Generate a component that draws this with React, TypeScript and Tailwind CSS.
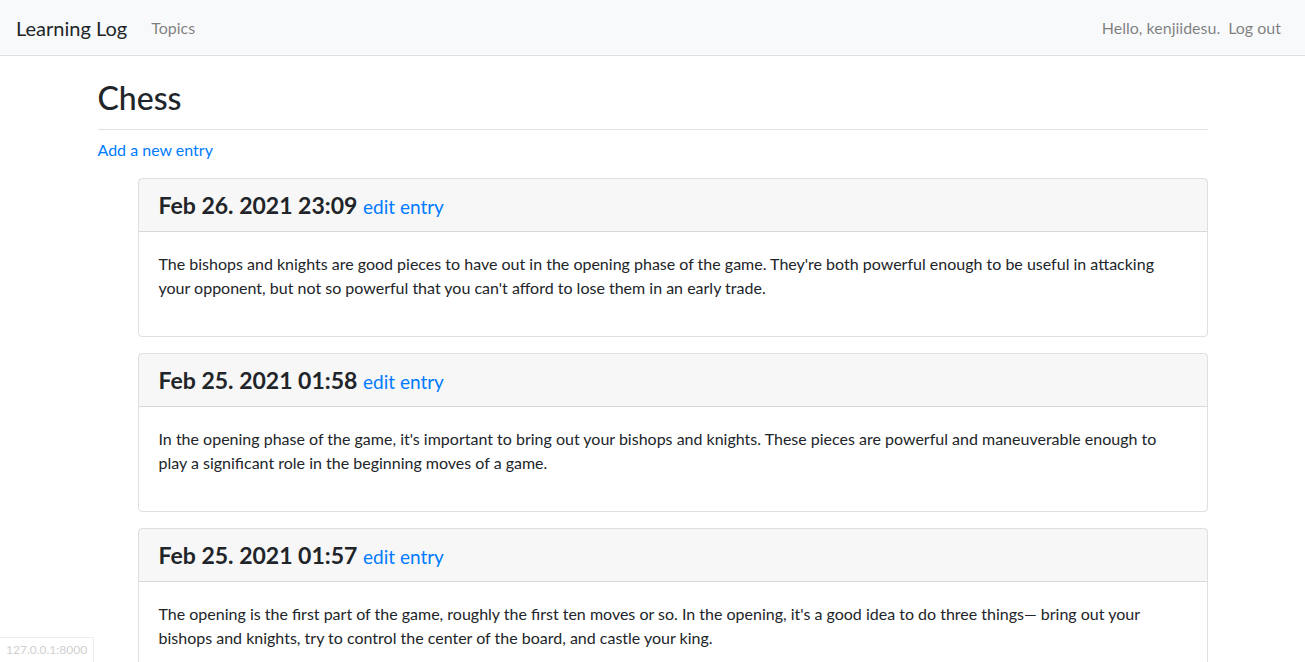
const entries = [
  {
    date: "Feb 26. 2021 23:09",
    text: "The bishops and knights are good pieces to have out in the opening phase of the game. They're both powerful enough to be useful in attacking your opponent, but not so powerful that you can't afford to lose them in an early trade.",
  },
  {
    date: "Feb 25. 2021 01:58",
    text: "In the opening phase of the game, it's important to bring out your bishops and knights. These pieces are powerful and maneuverable enough to play a significant role in the beginning moves of a game.",
  },
  {
    date: "Feb 25. 2021 01:57",
    text: "The opening is the first part of the game, roughly the first ten moves or so. In the opening, it's a good idea to do three things\u2014 bring out your bishops and knights, try to control the center of the board, and castle your king.",
  },
];

const App = () => {
  return (
    <div className="min-h-screen bg-white text-[#212529] font-['Lato',sans-serif] text-base leading-6">
      <nav className="flex h-[56px] items-center justify-between border-b border-[#dfdfdf] bg-[#f8f9fa] px-4">
        <div className="flex items-center">
          <span className="mr-4 text-xl leading-[30px] text-[#212529]">Learning Log</span>
          <a className="px-2 text-[rgba(0,0,0,0.5)]">Topics</a>
        </div>
        <div className="flex items-center">
          <span className="text-[rgba(0,0,0,0.5)]">Hello, kenjiidesu.</span>
          <a className="px-2 text-[rgba(0,0,0,0.5)]">Log out</a>
        </div>
      </nav>

      <main className="mx-auto w-[1140px] px-[15px]">
        <div className="mt-[23px] mb-2 border-b border-[#dee2e6] pb-3">
          <h2 className="text-[32px] font-medium leading-[38px]">Chess</h2>
        </div>
        <p className="mb-4">
          <a className="text-[#007bff]">Add a new entry</a>
        </p>

        <div className="ml-10">
          {entries.map((e) => (
            <div key={e.date} className="mb-4 rounded border border-[rgba(0,0,0,0.125)]">
              <div className="border-b border-[rgba(0,0,0,0.125)] bg-[rgba(0,0,0,0.03)] px-5 py-3">
                <h4 className="text-[23px] font-bold leading-[28px]">
                  {e.date}{" "}
                  <small className="text-[19px] font-normal leading-none text-[#007bff]">edit entry</small>
                </h4>
              </div>
              <div className="p-5">
                <p className="mb-4">{e.text}</p>
              </div>
            </div>
          ))}
        </div>
      </main>

      <div className="fixed bottom-0 left-0 w-[94px] border-t border-r border-[#ececec] bg-white px-1.5 py-1 text-xs text-[#d0d0d0]">
        127.0.0.1:8000
      </div>
    </div>
  );
};

export default App;
